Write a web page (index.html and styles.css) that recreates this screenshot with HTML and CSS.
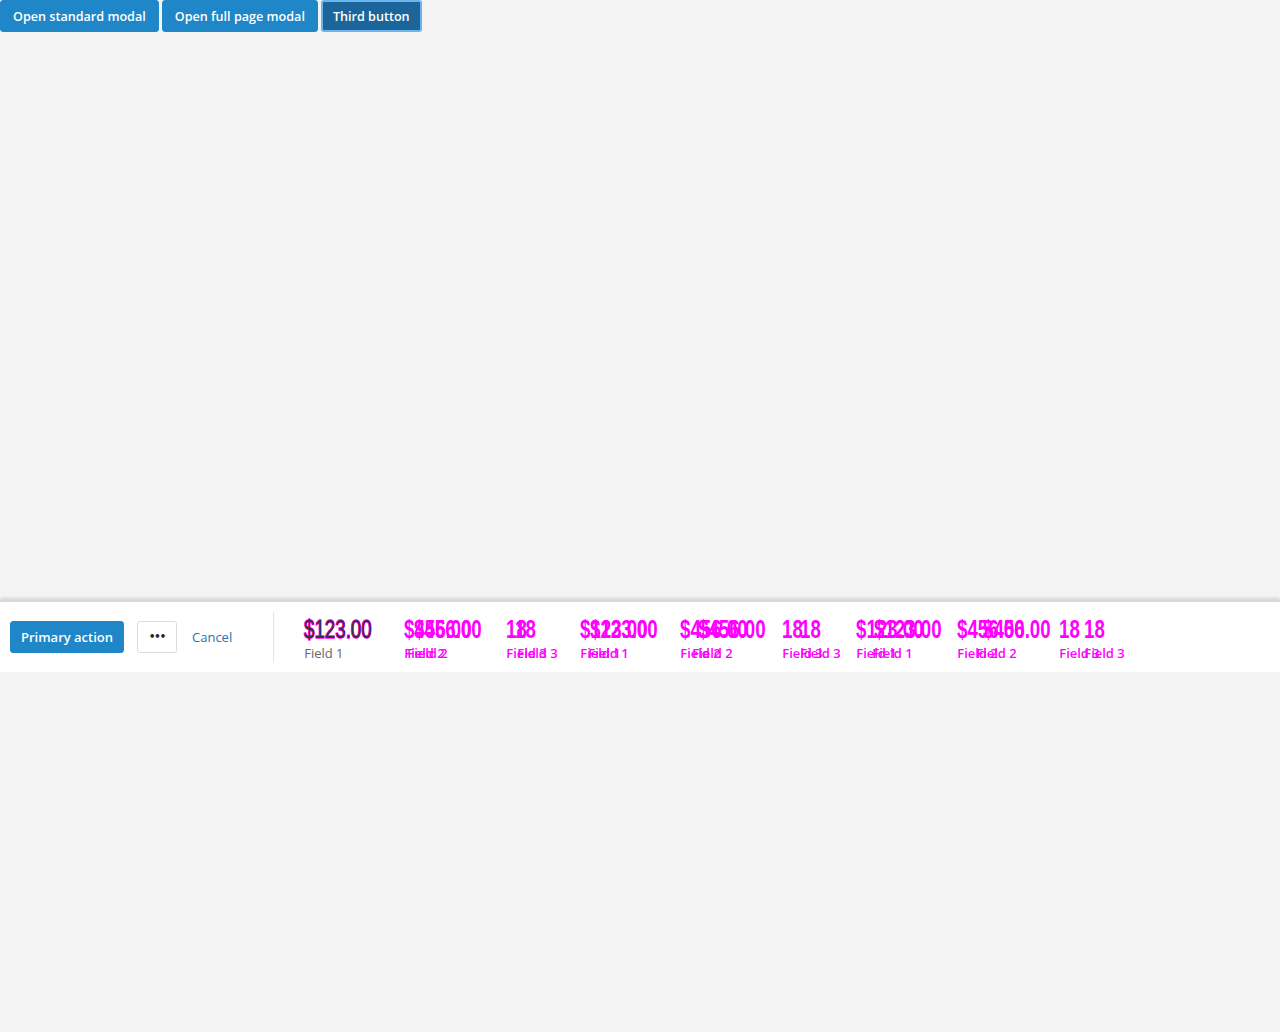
FILE: index.html
```html
<!DOCTYPE html>
<html>
<head>
<meta charset="utf-8">
<link rel="stylesheet" href="styles.css">
</head>
<body>
<div class="top-actions">
  <button class="btn">Open standard modal</button>
  <button class="btn">Open full page modal</button>
  <button class="btn btn-focus">Third button</button>
</div>
<div class="action-bar">
  <div class="actions">
    <button class="btn btn-primary">Primary action</button>
    <button class="btn-more">&bull;&bull;&bull;</button>
    <a class="cancel" href="#">Cancel</a>
  </div>
  <div class="divider"></div>
  <div class="summary">
    <div class="layer layer-b">
      <div class="field f1"><div class="value">$123.00</div><div class="label">Field 1</div></div>
      <div class="field f2"><div class="value">$456.00</div><div class="label">Field 2</div></div>
      <div class="field f3"><div class="value">18</div><div class="label">Field 3</div></div>
      <div class="field f4"><div class="value">$123.00</div><div class="label">Field 1</div></div>
      <div class="field f5"><div class="value">$456.00</div><div class="label">Field 2</div></div>
      <div class="field f6"><div class="value">18</div><div class="label">Field 3</div></div>
      <div class="field f7"><div class="value">$123.00</div><div class="label">Field 1</div></div>
      <div class="field f8"><div class="value">$456.00</div><div class="label">Field 2</div></div>
      <div class="field f9"><div class="value">18</div><div class="label">Field 3</div></div>
    </div>
    <div class="layer layer-a">
      <div class="field f1"><div class="value">$123.00</div><div class="label">Field 1</div></div>
      <div class="field f2"><div class="value">$456.00</div><div class="label">Field 2</div></div>
      <div class="field f3"><div class="value">18</div><div class="label">Field 3</div></div>
      <div class="field f4"><div class="value">$123.00</div><div class="label">Field 1</div></div>
      <div class="field f5"><div class="value">$456.00</div><div class="label">Field 2</div></div>
      <div class="field f6"><div class="value">18</div><div class="label">Field 3</div></div>
      <div class="field f7"><div class="value">$123.00</div><div class="label">Field 1</div></div>
      <div class="field f8"><div class="value">$456.00</div><div class="label">Field 2</div></div>
      <div class="field f9"><div class="value">18</div><div class="label">Field 3</div></div>
    </div>
  </div>
</div>
</body>
</html>
```
FILE: styles.css
```css
html, body {
  margin: 0;
  padding: 0;
  background: #f3f3f3;
  font-family: "Open Sans", "Liberation Sans", sans-serif;
}

.top-actions {
  display: flex;
  gap: 3px;
  height: 32px;
}

.btn {
  font-family: "Open Sans", "Liberation Sans", sans-serif;
  font-size: 12.6px;
  font-weight: 600;
  color: #fff;
  background: #1f86c8;
  border: 1px solid #1f86c8;
  border-radius: 3px;
  height: 32px;
  padding: 0 12px;
  margin: 0;
  cursor: pointer;
}

.btn-focus {
  background: #1b659b;
  border: 2px solid #6bb3ec;
  padding: 0 10px;
}

.action-bar {
  margin-top: 569px;
  background: #fff;
  height: 71px;
  display: flex;
  align-items: center;
  box-shadow: 0 -3px 3px rgba(0, 0, 0, 0.12);
  border-top: 1px solid #d8d8d8;
  box-sizing: border-box;
}

.actions {
  display: flex;
  align-items: center;
  padding-left: 10px;
}

.btn-primary {
  width: 114px;
  padding: 0;
  font-size: 13px;
}

.btn-more {
  margin-left: 13px;
  width: 40px;
  height: 32px;
  background: #fff;
  border: 1px solid #dcdcdc;
  border-radius: 3px;
  font-size: 10px;
  font-weight: 700;
  color: #222;
  letter-spacing: -1px;
  padding: 0 0 2px 0;
  font-family: "DejaVu Sans", sans-serif;
}

.cancel {
  margin-left: 15px;
  font-size: 13px;
  color: #2b6fb3;
  text-decoration: none;
}

.divider {
  width: 1px;
  height: 51px;
  background: #e4e4e4;
  margin-left: 41px;
}

.summary {
  position: relative;
  margin-left: 30px;
  height: 51px;
}

.layer {
  display: flex;
}

.layer-b {
  position: absolute;
  top: 0;
  left: 0;
}

.field {
  flex: none;
  padding-top: 2px;
}

.value {
  font-family: "Liberation Sans", "DejaVu Sans", sans-serif;
  font-size: 26px;
  font-weight: 700;
  line-height: 30px;
  color: #ff00ff;
  white-space: nowrap;
  transform: scaleX(0.72);
  transform-origin: left center;
}

.label {
  font-size: 13px;
  line-height: 16px;
  margin-top: 1px;
  color: #ff00ff;
  font-weight: 600;
  white-space: nowrap;
}

.layer-a .f1 .value {
  color: #333;
  font-weight: 400;
}

.layer-a .f1 .label {
  color: #666;
  font-weight: 400;
}

.layer-b .f1 .label {
  visibility: hidden;
}

.layer-b .f1 .value {
  -webkit-text-stroke: 1.5px #ff00ff;
  font-weight: 400;
}

/* layer a: column widths */
.layer-a .f1, .layer-a .f4 { width: 100px; }
.layer-a .f2, .layer-a .f5 { width: 102px; }
.layer-a .f3, .layer-a .f6 { width: 74px; }
.layer-a .f7 { width: 101px; }
.layer-a .f8 { width: 102px; }

/* layer b: shifted copy */
.layer-b .f1 { width: 103px; }
.layer-b .f2 { width: 110px; }
.layer-b .f3 { width: 71px; }
.layer-b .f4 { width: 104px; }
.layer-b .f5 { width: 108px; }
.layer-b .f6 { width: 72px; }
.layer-b .f7 { width: 104px; }
.layer-b .f8 { width: 108px; }

.layer-b .f2 .value { margin-left: 7px; }
.layer-b .f3 .value { margin-left: -2px; }
.layer-b .f4 .value { margin-left: 2px; }
.layer-b .f5 .value { margin-left: 6px; }
.layer-b .f7 .value { margin-left: 2px; }
.layer-b .f8 .value { margin-left: 7px; }
```
